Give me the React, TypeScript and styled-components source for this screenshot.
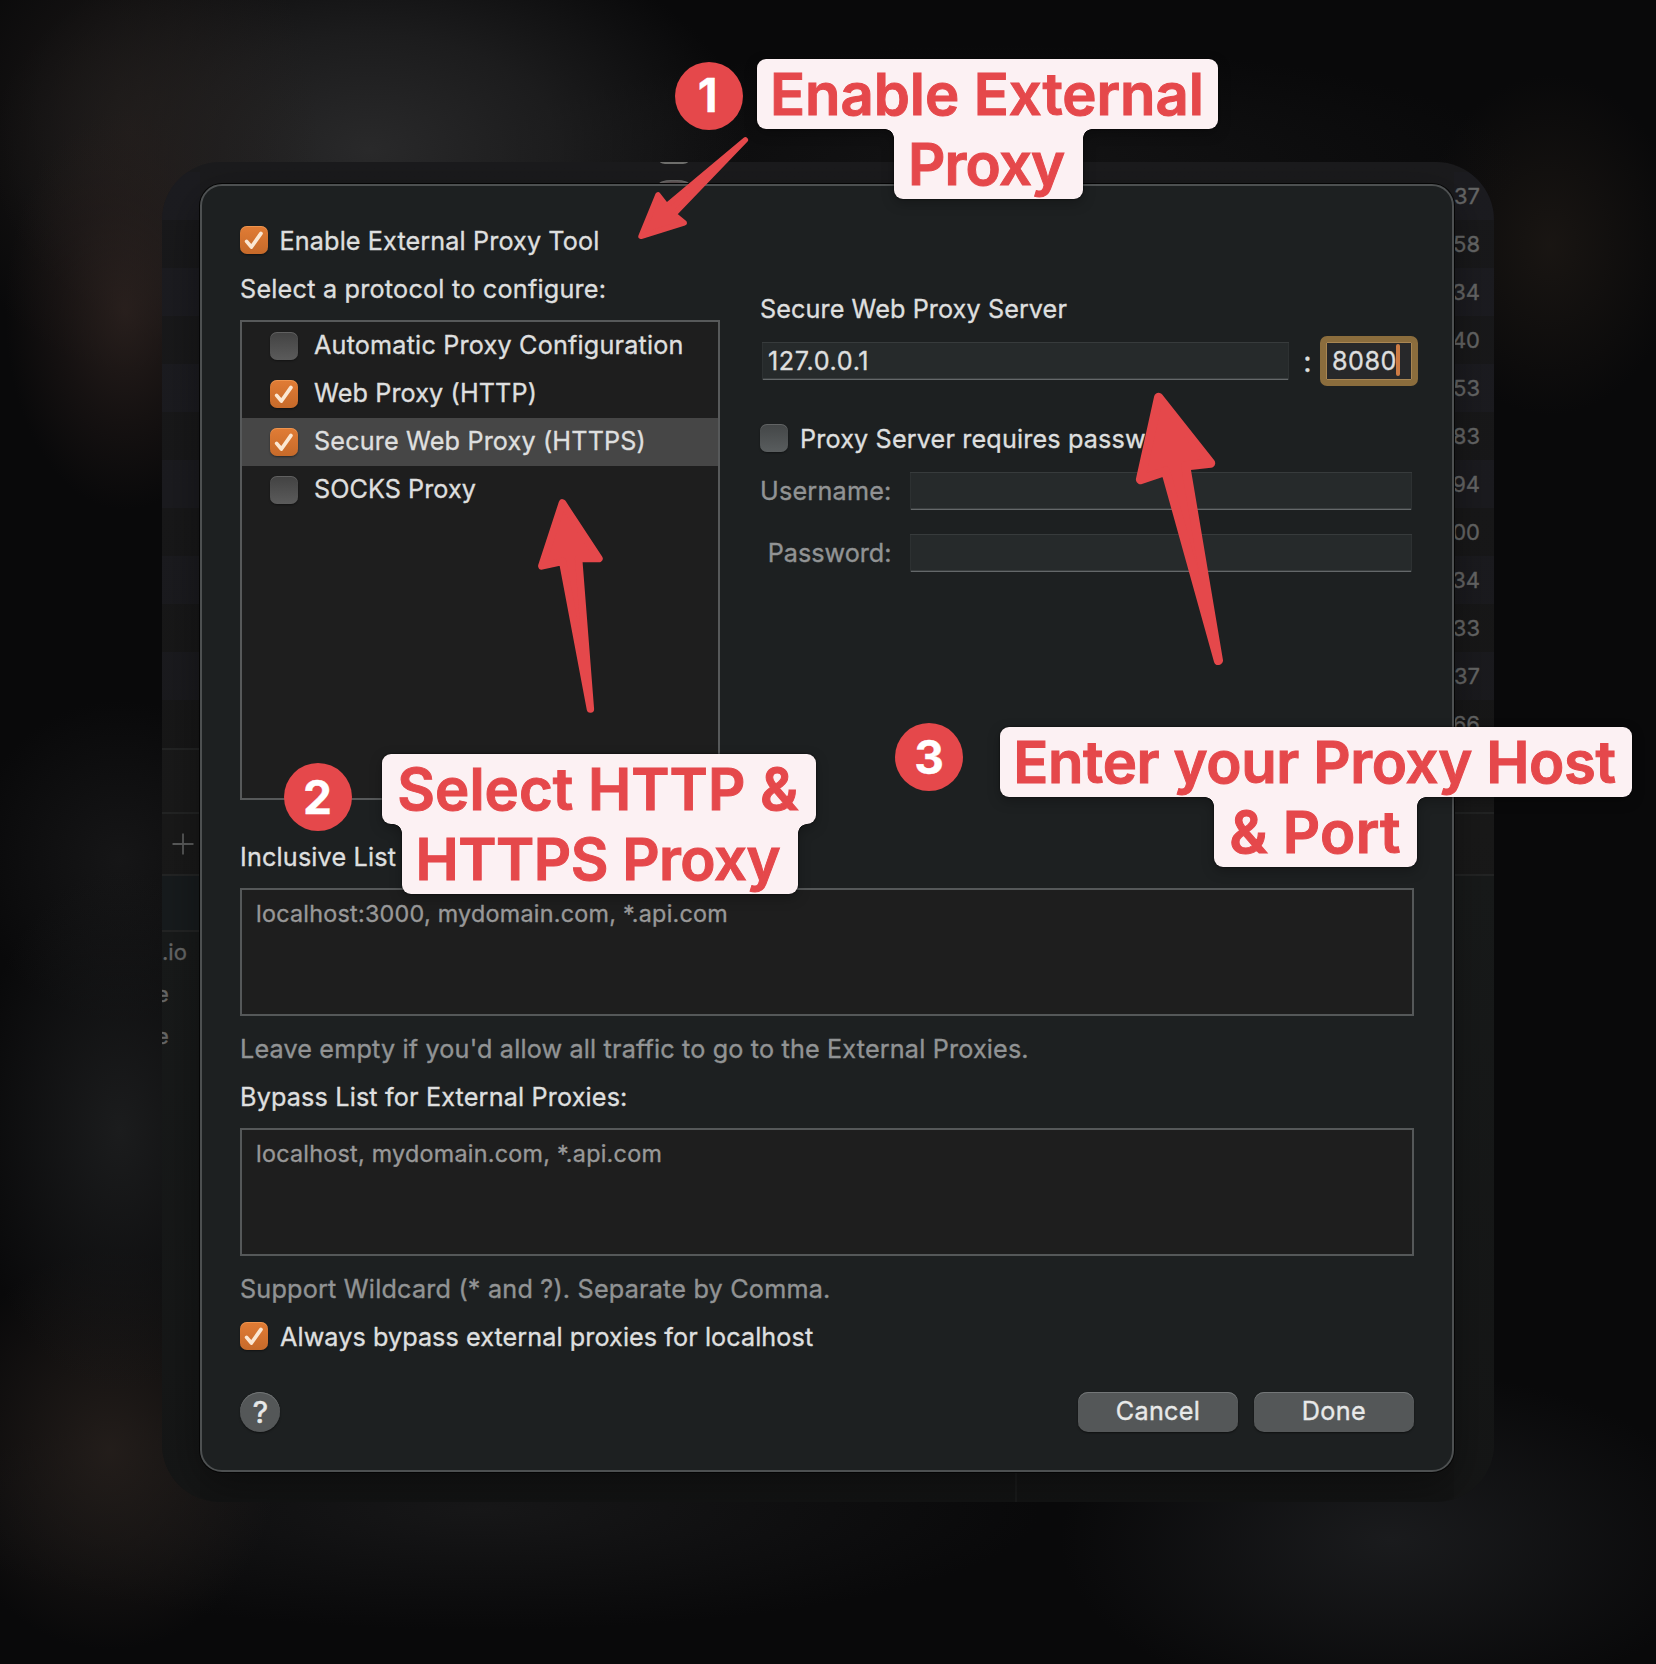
import React from 'react';
import styled, { createGlobalStyle, css } from 'styled-components';

const RED = '#e5484b';
const FONT = '"Inter", "Liberation Sans", sans-serif';

const GlobalStyle = createGlobalStyle`
  *, *::before, *::after { box-sizing: border-box; }
  body { margin: 0; background: #09090a; }
`;

const Desktop = styled.main`
  position: relative;
  width: 1656px;
  height: 1664px;
  padding: 162px;
  overflow: hidden;
  font-family: ${FONT};
  -webkit-text-stroke: 0.35px currentColor;
  background:
    radial-gradient(ellipse 120px 200px at 125px 310px, rgba(46, 35, 32, 0.8), rgba(40, 30, 28, 0.4) 55%, rgba(40, 30, 28, 0)),
    radial-gradient(ellipse 190px 240px at 130px 130px, rgba(36, 31, 29, 0.75), rgba(36, 31, 29, 0)),
    radial-gradient(ellipse 380px 230px at 370px 150px, rgba(43, 43, 44, 0.95), rgba(36, 36, 37, 0.7) 50%, rgba(24, 24, 25, 0)),
    radial-gradient(ellipse 520px 120px at 1000px 165px, rgba(22, 22, 23, 0.8), rgba(18, 18, 19, 0)),
    radial-gradient(ellipse 130px 170px at 1550px 245px, rgba(26, 22, 19, 0.95), rgba(24, 20, 18, 0)),
    radial-gradient(ellipse 150px 260px at 120px 1130px, rgba(28, 29, 30, 0.95), rgba(22, 23, 24, 0)),
    radial-gradient(ellipse 150px 160px at 120px 860px, rgba(25, 25, 26, 0.8), rgba(20, 20, 22, 0)),
    radial-gradient(ellipse 170px 200px at 110px 1450px, rgba(36, 30, 27, 0.95), rgba(28, 24, 22, 0)),
    radial-gradient(ellipse 330px 170px at 1390px 1540px, rgba(27, 28, 30, 0.95), rgba(22, 22, 24, 0)),
    radial-gradient(ellipse 560px 120px at 480px 1510px, rgba(24, 24, 25, 0.9), rgba(20, 20, 22, 0)),
    #09090a;
`;

const Window = styled.div`
  display: grid;
  grid-template: 22px 1288px 30px / 38px 1254px 40px;
  width: 1332px;
  height: 1340px;
  border-radius: 58px;
  overflow: hidden;
  background: linear-gradient(#1b1b1d, #191919 50%, #151515 96%, #131414);
`;

const Toolbar = styled.div`
  grid-area: 1 / 2 / 2 / 3;
  display: flex;
  flex-direction: column;
  justify-content: space-between;
  align-items: flex-start;
  padding-left: 496px;
  padding-left: 459px;
`;

const ToolbarMark = styled.span<{ $lower?: boolean }>`
  width: ${p => (p.$lower ? 30 : 28)}px;
  height: ${p => (p.$lower ? 4 : 2)}px;
  margin-left: ${p => (p.$lower ? 0 : 1)}px;
  background: ${p => (p.$lower ? 'radial-gradient(ellipse at 50% 100%, #5d4f50 30%, #70706f 70%)' : '#70706e')};
  border-radius: ${p => (p.$lower ? '12px 12px 0 0 / 4px 4px 0 0' : '0 0 8px 8px / 0 0 2px 2px')};
`;

const StatusBar = styled.div`
  grid-area: 3 / 2 / 4 / 3;
  display: flex;
`;

const StatusPane = styled.div`
  width: 817px;
  border-right: 2px solid #1a1b1b;
`;

const SideStrip = styled.div<{ $side: 'left' | 'right' }>`
  grid-row: 1 / 4;
  grid-column: ${p => (p.$side === 'left' ? 1 : 3)};
  display: flex;
  flex-direction: column;
  padding-top: 10px;
`;

const StripRow = styled.div<{ $alt: boolean }>`
  display: flex;
  justify-content: flex-end;
  height: 48px;
  flex: none;
  padding: 11px 14px 0 0;
  font-size: 22px;
  line-height: 26px;
  color: #666767;
  background: ${p => (p.$alt ? 'rgba(0, 0, 0, 0.06)' : 'rgba(40, 40, 80, 0.07)')};
`;

const StripBand = styled.div<{ $h: number; $tint?: boolean; $plain?: boolean }>`
  display: flex;
  align-items: center;
  justify-content: center;
  height: ${p => p.$h}px;
  flex: none;
  padding-left: 3px;
  border-top: 2px solid ${p => (p.$plain ? 'transparent' : '#232424')};
  background: ${p => (p.$tint ? 'rgba(20, 36, 42, 0.25)' : 'none')};
`;

const StripFiles = styled.div`
  flex: 1;
  border-top: 2px solid #232424;
  font-size: 22px;
  line-height: 41px;
  color: #666767;
  background: linear-gradient(#181a1a, #151616);
`;

const FileName = styled.div<{ $cut?: boolean }>`
  height: 42px;
  margin-left: ${p => (p.$cut ? -6 : 0)}px;
`;

const Sheet = styled.section`
  grid-area: 2 / 2 / 3 / 3;
  z-index: 1;
  display: flex;
  flex-direction: column;
  padding: 40px 38px 38px;
  border: 2px solid #4d5051;
  border-radius: 22px;
  background: #1d2021;
  box-shadow: 0 0 0 1px #050505, 0 14px 44px rgba(0, 0, 0, 0.38);
`;

const Text = styled.span<{ $track?: number; $dim?: boolean; $nudge?: number; $above?: number }>`
  display: block;
  font-size: 25.2px;
  line-height: 30px;
  height: 30px;
  white-space: nowrap;
  letter-spacing: ${p => p.$track ?? 0.18}px;
  color: ${p => (p.$dim ? '#919394' : '#dedfdf')};
  margin: ${p => p.$above ?? 0}px 0 0 ${p => p.$nudge ?? 0}px;
`;

const CheckRow = styled.label`
  display: flex;
  align-items: flex-start;
  height: 30px;
  gap: 12px;
`;

const Box = styled.span<{ $on?: boolean; $tone?: 'sheet' | 'list' }>`
  display: block;
  flex: none;
  width: 28px;
  height: 28px;
  border-radius: 7px;
  ${p =>
    p.$on
      ? css`
          background: linear-gradient(#e17c35, #c66a2a);
          box-shadow: inset 0 1px 0 rgba(255, 180, 110, 0.45), 0 1px 2px rgba(0, 0, 0, 0.45);
        `
      : css`
          background: ${p.$tone === 'list' ? 'linear-gradient(#424242, #5b5b5b)' : 'linear-gradient(#434647, #595d5e)'};
          box-shadow: inset 0 1px 0 rgba(255, 255, 255, 0.16), 0 1px 2px rgba(0, 0, 0, 0.4);
        `}
  svg { display: block; }
`;

const Columns = styled.div`
  display: grid;
  grid-template-columns: 480px 654px;
  column-gap: 40px;
  height: 574px;
`;

const ProtocolColumn = styled.div`
  display: flex;
  flex-direction: column;
`;

const ProtocolList = styled.div`
  height: 480px;
  margin-top: 16px;
  border: 2px solid #57595a;
  background: #1e1e1e;
`;

const ProtocolRow = styled.label<{ $selected?: boolean }>`
  display: flex;
  align-items: center;
  height: 48px;
  padding-left: 28px;
  gap: 16px;
  background: ${p => (p.$selected ? '#464646' : 'transparent')};
  ${Text} { margin-bottom: 2px; }
`;

const ServerColumn = styled.div`
  display: flex;
  flex-direction: column;
  padding-top: 68px;
`;

const Field = styled.div<{ $w: number }>`
  width: ${p => p.$w}px;
  height: 38px;
  padding: 4px 6px;
  background: #262a2b;
  box-shadow: inset 0 1px 0 #373b3c, inset 1px 0 0 #2d3132, inset -1px 0 0 #2d3132, inset 0 -1px 0 #64686a, inset 0 -2px 0 #3a3e3f;
`;

const PortField = styled(Field)`
  display: flex;
  padding: 2px 6px;
  border-radius: 1px;
  background: #27282a;
  box-shadow: inset 0 0 0 1px #a98653;
  outline: 6px solid #8b6d3d;
  ${Text} { margin-top: 2px; }
`;

const Caret = styled.i`
  width: 4px;
  height: 32px;
  margin-left: -1px;
  border-radius: 2px;
  background: #cd7b44;
`;

const AddressRow = styled.div`
  display: flex;
  align-items: flex-start;
  justify-content: space-between;
  margin: 18px 2px 44px;
`;

const Colon = styled.span`
  margin: 3px 0 0;
  font-size: 29px;
  line-height: 34px;
  color: #dedfdf;
`;

const Credentials = styled.div`
  display: grid;
  grid-template-columns: 131px 502px;
  gap: 24px 19px;
  margin-top: 18px;
  ${Text} { margin: 4px -0.5px 0 0; text-align: right; }
`;

const HostList = styled.div`
  height: 128px;
  flex: none;
  margin: 16px 0 18px;
  padding: 9px 14px;
  border: 2px solid #555859;
  background: #1e1e1e;
  color: #989898;
  font-size: 23.3px;
  line-height: 29px;
  letter-spacing: 0.27px;
`;

const Footer = styled.footer`
  display: flex;
  align-items: center;
  gap: 16px;
  margin-top: 40px;
`;

const HelpButton = styled.button`
  width: 40px;
  height: 40px;
  padding: 0 0 0 1px;
  margin-right: auto;
  border: 0;
  border-radius: 50%;
  background: #545758;
  box-shadow: inset 0 1px 0 #727576, 0 1px 2px rgba(0, 0, 0, 0.5);
  color: #e8e9e9;
  font: 400 30px/40px ${FONT};
  -webkit-text-stroke: 0.6px currentColor;
`;

const PushButton = styled.button<{ $track: number }>`
  width: 160px;
  height: 40px;
  padding: 0 0 2px;
  border: 0;
  border-radius: 10px;
  background: #545758;
  box-shadow: inset 0 1px 0 #747778, 0 1px 2px rgba(0, 0, 0, 0.5);
  color: #e8e9e9;
  font: 400 25.2px/38px ${FONT};
  letter-spacing: ${p => p.$track}px;
  -webkit-text-stroke: 0.35px currentColor;
`;

const Badge = styled.div<{ $x: number; $y: number; $lift?: number }>`
  position: absolute;
  left: ${p => p.$x}px;
  top: ${p => p.$y}px;
  width: 68px;
  height: 68px;
  padding-right: ${p => (p.$lift ? 2 : 0)}px;
  border-radius: 50%;
  background: ${RED};
  color: #fff;
  font-size: 46px;
  font-weight: 700;
  line-height: ${p => 68 - 2 * (p.$lift ?? 0)}px;
  text-align: center;
  z-index: 2;
`;

const Callout = styled.div<{ $x: number; $y: number }>`
  position: absolute;
  left: ${p => p.$x}px;
  top: ${p => p.$y}px;
  z-index: 2;
  filter: drop-shadow(0 0 1px rgba(0, 0, 0, 0.7)) drop-shadow(0 4px 6px rgba(0, 0, 0, 0.25));
`;

const CalloutLine = styled.div<{ $w: number; $pad: number; $track: number; $offset?: number }>`
  position: relative;
  width: ${p => p.$w}px;
  height: 70px;
  margin-left: ${p => p.$offset ?? 0}px;
  padding-left: ${p => p.$pad}px;
  border-radius: ${p => (p.$offset ? '0 0 9px 9px' : '9px')};
  background: #fcf1f3;
  color: ${RED};
  font-size: 58px;
  font-weight: 600;
  line-height: 70px;
  letter-spacing: ${p => p.$track}px;
  white-space: nowrap;
  -webkit-text-stroke: 1px currentColor;
  ${p =>
    p.$offset &&
    css`
      &::before,
      &::after {
        content: '';
        position: absolute;
        top: -1px;
        width: 10px;
        height: 10px;
      }
      &::before {
        right: calc(100% - 1px);
        background: radial-gradient(circle at 0 100%, transparent 8.5px, #fcf1f3 9.2px);
      }
      &::after {
        left: calc(100% - 1px);
        background: radial-gradient(circle at 100% 100%, transparent 8.5px, #fcf1f3 9.2px);
      }
    `}
`;

const Arrows = styled.svg`
  position: absolute;
  inset: 0;
  z-index: 1;
  fill: ${RED};
  stroke: ${RED};
  stroke-linejoin: round;
`;

const Check = ({ on, tone }: { on?: boolean; tone?: 'sheet' | 'list' }) => (
  <Box $on={on} $tone={tone}>
    {on && (
      <svg width="28" height="28" viewBox="0 0 28 28" fill="none">
        <path d="M6.6 15.4 11.4 21 21 7.4" stroke="#fbe7d2" strokeWidth="3.7" strokeLinecap="round" strokeLinejoin="round" />
      </svg>
    )}
  </Box>
);

const protocols = [
  { name: 'Automatic Proxy Configuration', on: false, track: 0.186 },
  { name: 'Web Proxy (HTTP)', on: true, track: 0.119 },
  { name: 'Secure Web Proxy (HTTPS)', on: true, track: 0.155, selected: true },
  { name: 'SOCKS Proxy', on: false, track: 0.052 },
];

const timings = ['37', '58', '34', '40', '53', '83', '94', '00', '34', '33', '37', '66'];

export default function App() {
  return (
    <>
      <GlobalStyle />
      <Desktop>
        <Window>
          <Toolbar>
            <ToolbarMark />
            <ToolbarMark $lower />
          </Toolbar>

          <SideStrip $side="left">
            {timings.map((_, i) => (
              <StripRow key={i} $alt={i % 2 === 1} />
            ))}
            <StripBand $h={64} />
            <StripBand $h={62}>
              <svg width="22" height="22" viewBox="0 0 22 22" stroke="#5a5b5b" strokeWidth="1.8">
                <path d="M11 .5v21M.5 11h21" />
              </svg>
            </StripBand>
            <StripBand $h={56} $tint />
            <StripFiles>
              <FileName>.io</FileName>
              <FileName $cut>e</FileName>
              <FileName $cut>e</FileName>
            </StripFiles>
          </SideStrip>

          <SideStrip $side="right">
            {timings.map((t, i) => (
              <StripRow key={i} $alt={i % 2 === 1}>{t}</StripRow>
            ))}
            <StripBand $h={64} $plain />
            <StripBand $h={62} />
            <StripFiles />
          </SideStrip>

          <Sheet>
            <Columns>
              <ProtocolColumn>
                <CheckRow>
                  <Check on />
                  <Text $track={0.113} $nudge={-0.4}>Enable External Proxy Tool</Text>
                </CheckRow>
                <Text $track={0.225} $above={18}>Select a protocol to configure:</Text>
                <ProtocolList>
                  {protocols.map(p => (
                    <ProtocolRow key={p.name} $selected={p.selected}>
                      <Check on={p.on} tone="list" />
                      <Text $track={p.track}>{p.name}</Text>
                    </ProtocolRow>
                  ))}
                </ProtocolList>
              </ProtocolColumn>

              <ServerColumn>
                <Text $track={0.089}>Secure Web Proxy Server</Text>
                <AddressRow>
                  <Field $w={527}>
                    <Text $track={0.6}>127.0.0.1</Text>
                  </Field>
                  <Colon>:</Colon>
                  <PortField $w={86}>
                    <Text $track={0.5}>8080</Text>
                    <Caret />
                  </PortField>
                </AddressRow>
                <CheckRow>
                  <Check />
                  <Text $track={0.15}>Proxy Server requires password</Text>
                </CheckRow>
                <Credentials>
                  <Text $dim $track={0.216}>Username:</Text>
                  <Field $w={502} />
                  <Text $dim $track={0}>Password:</Text>
                  <Field $w={502} />
                </Credentials>
              </ServerColumn>
            </Columns>

            <Text $track={0.17} $above={42}>Inclusive List</Text>
            <HostList>localhost:3000, mydomain.com, *.api.com</HostList>
            <Text $dim $track={0.165}>Leave empty if you'd allow all traffic to go to the External Proxies.</Text>
            <Text $track={0.16} $above={18}>Bypass List for External Proxies:</Text>
            <HostList>localhost, mydomain.com, *.api.com</HostList>
            <Text $dim $track={0.205}>Support Wildcard (* and ?). Separate by Comma.</Text>
            <CheckRow style={{ marginTop: 18 }}>
              <Check on />
              <Text $track={0.075}>Always bypass external proxies for localhost</Text>
            </CheckRow>

            <Footer>
              <HelpButton>?</HelpButton>
              <PushButton $track={0.28}>Cancel</PushButton>
              <PushButton $track={0.38}>Done</PushButton>
            </Footer>
          </Sheet>

          <StatusBar>
            <StatusPane />
          </StatusBar>
        </Window>

        <Arrows width="1656" height="1664" viewBox="0 0 1656 1664">
          <path strokeWidth="5.4" d="M745.4 139.9 666.6 205.8 658 194.9 641 236.3 684.2 222.8 673.8 214.3Z" />
          <path strokeWidth="7.4" d="M562.4 502.9 599 558.6 578.6 558.6 590.4 709 562.6 561.5 541.8 566Z" />
          <path strokeWidth="9.2" d="M1158.6 397.4 1210.6 463.2 1185.6 465.8 1218.4 660.4 1165.7 471.2 1140.5 479.6Z" />
        </Arrows>

        <Badge $x={674.7} $y={62} $lift={1}>1</Badge>
        <Callout $x={757} $y={59}>
          <CalloutLine $w={460.5} $pad={13} $track={-0.08}>Enable External</CalloutLine>
          <CalloutLine $w={188.5} $pad={14} $track={-0.788} $offset={137}>Proxy</CalloutLine>
        </Callout>

        <Badge $x={283.5} $y={762.7}>2</Badge>
        <Callout $x={382} $y={753.6}>
          <CalloutLine $w={434.3} $pad={15.3} $track={0.04}>{'Select HTTP &'}</CalloutLine>
          <CalloutLine $w={396} $pad={13.4} $track={-0.47} $offset={20}>HTTPS Proxy</CalloutLine>
        </Callout>

        <Badge $x={895} $y={722.8}>3</Badge>
        <Callout $x={1000} $y={726.6}>
          <CalloutLine $w={632} $pad={13.2} $track={-0.35}>Enter your Proxy Host</CalloutLine>
          <CalloutLine $w={203.5} $pad={15.6} $track={0.3} $offset={213.6}>{'& Port'}</CalloutLine>
        </Callout>
      </Desktop>
    </>
  );
}
